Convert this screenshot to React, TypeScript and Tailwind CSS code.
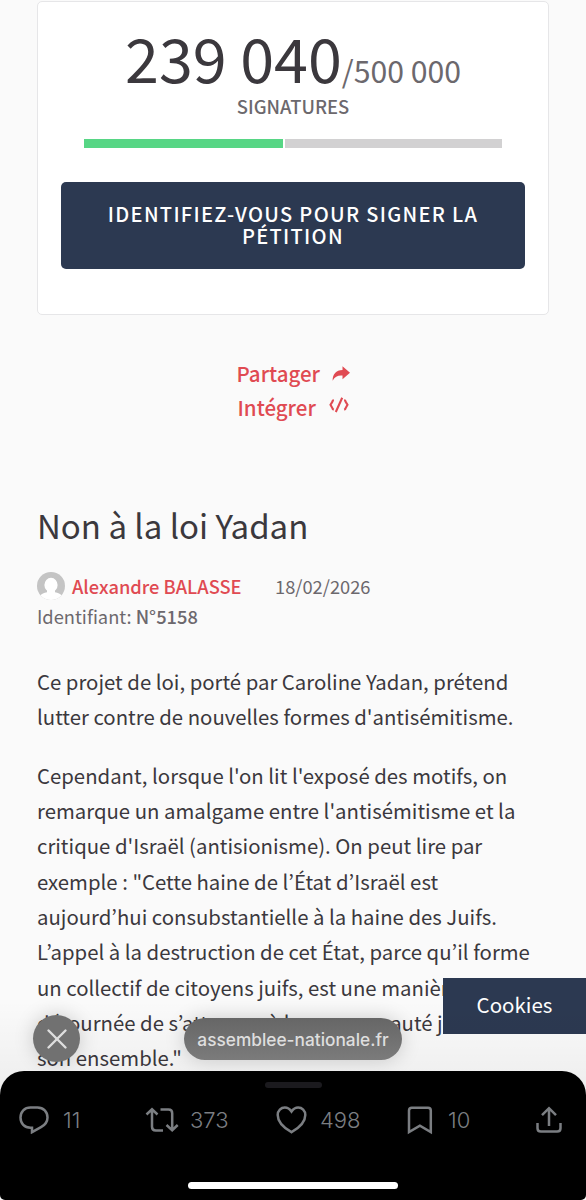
import React from "react";
import {X} from "lucide-react";

const paragraphs = [
    [
        "Ce projet de loi, porté par Caroline Yadan, prétend",
        "lutter contre de nouvelles formes d'antisémitisme.",
    ],
    [
        "Cependant, lorsque l'on lit l'exposé des motifs, on",
        "remarque un amalgame entre l'antisémitisme et la",
        "critique d'Israël (antisionisme). On peut lire par",
        "exemple : \"Cette haine de l’État d’Israël est",
        "aujourd’hui consubstantielle à la haine des Juifs.",
        "L’appel à la destruction de cet État, parce qu’il forme",
        "un collectif de citoyens juifs, est une manière",
        "détournée de s’attaquer à la communauté juive dans",
        "son ensemble.\"",
    ],
];

export default function App() {
    return (
        <main className="relative h-[1200px] w-[586px] overflow-hidden bg-[#fafafa] font-['Noto_Sans_CJK_KR','Open_Sans',sans-serif] text-[#3b383d]">
            <div className="px-[37px] pt-px">
                <SignatureCard/>
                <div className="mt-[41px] flex flex-col items-center text-[20.5px] font-medium leading-[34px] text-[#e04a52]">
                    <a className="flex w-[113px] items-center justify-between whitespace-nowrap">
                        Partager <ShareArrow/>
                    </a>
                    <a className="flex w-[111px] items-center justify-between whitespace-nowrap">
                        Intégrer <EmbedIcon/>
                    </a>
                </div>
                <h1 className="mt-[77px] whitespace-nowrap text-[33px] leading-[48px]">Non à la loi Yadan</h1>
                <div className="mt-[22px] flex h-[30px] items-center whitespace-nowrap text-[18.3px] leading-[30px]">
                    <Avatar/>
                    <span className="ml-[7px] w-[203px] font-medium text-[#e04a52]">Alexandre BALASSE</span>
                    <span className="text-[#6c686d]">18/02/2026</span>
                </div>
                <p className="whitespace-nowrap text-[18.3px] leading-[30px] text-[#6c686d]">
                    Identifiant: <span className="font-medium">N°5158</span>
                </p>
                <div className="mt-[33px] flex flex-col gap-[23px]">
                    {paragraphs.map((lines, i) => (
                        <div key={i} className="text-[20.35px] leading-[35.35px]">
                            {lines.map((line) => (
                                <p key={line} className="whitespace-nowrap">{line}</p>
                            ))}
                        </div>
                    ))}
                </div>
            </div>

            <div className="absolute right-0 top-[978px] flex h-[56px] w-[143px] items-center justify-center bg-[#2c3951] pb-[3px] text-[20.5px] text-white">
                Cookies
            </div>
            <BrowserControls/>
            <TweetBar/>
        </main>
    );
}

function SignatureCard() {
    return (
        <section className="h-[314px] rounded-[5px] border border-[#e6e6e8] bg-white px-[23px] text-center">
            <div className="flex h-[84px] items-baseline justify-center whitespace-nowrap pt-[25px]">
                <span className="text-[61px] leading-[60px]">239 040</span>
                <span className="text-[30.2px] leading-[30px] text-[#6c686d]">/500 000</span>
            </div>
            <p className="mt-[8px] text-[18.4px] font-medium leading-[24px] text-[#6c686d]">SIGNATURES</p>
            <div className="mx-auto mt-[21px] flex h-[9px] w-[418px] gap-[2px]">
                <div className="w-[199px] bg-[#57d685]"/>
                <div className="flex-1 bg-[#d2d1d2]"/>
            </div>
            <button className="mt-[34px] flex h-[87px] w-full flex-col items-center justify-center rounded-[5px] bg-[#2c3951] pb-px text-[20px] font-medium leading-[22.5px] tracking-[1.3px] text-white">
                <span className="whitespace-nowrap">IDENTIFIEZ-VOUS POUR SIGNER LA</span>
                <span>PÉTITION</span>
            </button>
        </section>
    );
}

function BrowserControls() {
    return (
        <>
            <div className="absolute left-0 top-[1000px] h-[90px] w-full bg-linear-to-b from-black/0 to-black/5"/>
            <button className="absolute left-[33px] top-[1015px] flex size-[47px] items-center justify-center rounded-full bg-[#717171] text-[#dedede] shadow-[0_0_20px_rgba(0,0,0,0.18)]">
                <X size={34} strokeWidth={1.7}/>
            </button>
            <div className="absolute left-[184px] top-[1018px] flex h-[42px] w-[218px] items-center justify-center rounded-full bg-linear-to-b from-[#666] to-[#7b7b7b] pt-px font-['Inter',sans-serif] text-[17.3px] font-medium text-[#dedede] shadow-[0_0_20px_rgba(0,0,0,0.18)]">
                assemblee-nationale.fr
            </div>
        </>
    );
}

function TweetBar() {
    return (
        <footer className="absolute left-0 top-[1071px] h-[129px] w-full rounded-b-[5px] rounded-t-[24px] bg-black font-['Inter',sans-serif] text-[22px] font-light text-[#7b7e82]">
            <div className="mx-auto h-[17px] w-[57px] pt-[11px]">
                <div className="h-[6px] rounded-full bg-[#1b1a1e]"/>
            </div>
            <div className="flex h-[64px] items-center pl-[19px]">
                <div className="flex w-[126px] items-center gap-[14px]"><ReplyIcon/>11</div>
                <div className="flex w-[131px] items-center gap-[11px]"><RepostIcon/>373</div>
                <div className="flex w-[131px] items-center gap-[13px]"><HeartIcon/>498</div>
                <div className="flex w-[128px] items-center gap-[15px]"><BookmarkIcon/>10</div>
                <UploadIcon/>
            </div>
            <div className="mx-auto mt-[30px] h-[7px] w-[210px] rounded-full bg-white"/>
        </footer>
    );
}

function ShareArrow() {
    return (
        <svg width="18" height="15" viewBox="0 0 18 15" fill="currentColor">
            <path d="M10.500.2 18 6.700l-7.500 6.500V9.600C6 9.200 3 10.500.6 14.800.6 8 4 4.200 10.500 3.900Z"/>
        </svg>
    );
}

function EmbedIcon() {
    return (
        <svg className="mb-[5px]" width="20" height="16" viewBox="0 0 20 16" fill="none" stroke="currentColor" strokeWidth="2.100">
            <path d="M4.800 3Q3.500 3.400 3.200 5L1.500 7.800l1.700 3q.3 1.500 1.600 2M13.200.8 6.800 15M15.200 3q1.300.4 1.600 2l1.700 2.800-1.700 3q-.3 1.500-1.600 2"/>
        </svg>
    );
}

function Avatar() {
    return (
        <svg width="28" height="28" viewBox="0 0 28 28">
            <defs>
                <clipPath id="avatar"><circle cx="14" cy="14" r="14"/></clipPath>
            </defs>
            <g clipPath="url(#avatar)">
                <rect width="28" height="28" fill="#c4c4c4"/>
                <ellipse cx="14" cy="13" rx="6.600" ry="7.200" fill="#fff"/>
                <path d="M10 17h8v3.200c3 .8 5.500 1.600 7 3.300V28H3v-4.500c1.500-1.700 4-2.500 7-3.300Z" fill="#fff"/>
            </g>
        </svg>
    );
}

const stroke = {fill: "none", stroke: "currentColor", strokeWidth: 2.5};

function ReplyIcon() {
    return (
        <svg width="30" height="28" viewBox="0 0 30 28" {...stroke}>
            <path d="M11.500 1.500h7C24.500 1.500 28.500 6 28.500 11.500c0 4.500-2.500 7.500-6.500 9.700L13 26.200v-4.500h-1.500C5.500 21.700 1.500 17.500 1.500 11.600S5.500 1.500 11.500 1.500Z"/>
        </svg>
    );
}

function RepostIcon() {
    return (
        <svg width="34" height="26" viewBox="0 0 34 26" {...stroke}>
            <path d="M1.500 7.500 7 2.300l5.500 5.200M7 2.500v17.300q0 3.700 3.700 3.700H18M15.500 2.500h8q3.700 0 3.700 3.700v17M21.500 18l5.700 5.200 5.500-5.200"/>
        </svg>
    );
}

function HeartIcon() {
    return (
        <svg width="31" height="28" viewBox="0 0 31 28" {...stroke}>
            <path d="M15.500 5.500C13.500 2.500 11 1.500 8.800 1.500 5 1.500 1.700 4.500 1.700 9c0 6.500 5.500 12.500 13.800 17.200C23.800 21.500 29.300 15.500 29.300 9c0-4.500-3.300-7.500-7.100-7.500-2.200 0-4.700 1-6.700 4Z"/>
        </svg>
    );
}

function BookmarkIcon() {
    return (
        <svg width="26" height="29" viewBox="0 0 26 29" {...stroke}>
            <path d="M2 26V4.500Q2 1.700 4.800 1.700H21q2.800 0 2.800 2.800V26l-10.900-6.300Z"/>
        </svg>
    );
}

function UploadIcon() {
    return (
        <svg width="28" height="28" viewBox="0 0 28 28" {...stroke}>
            <path d="M14 20V2.500M7 9.200l7-7 7 7M2.500 17v5.200q0 3.300 3.300 3.300h16.400q3.300 0 3.300-3.300V17"/>
        </svg>
    );
}
